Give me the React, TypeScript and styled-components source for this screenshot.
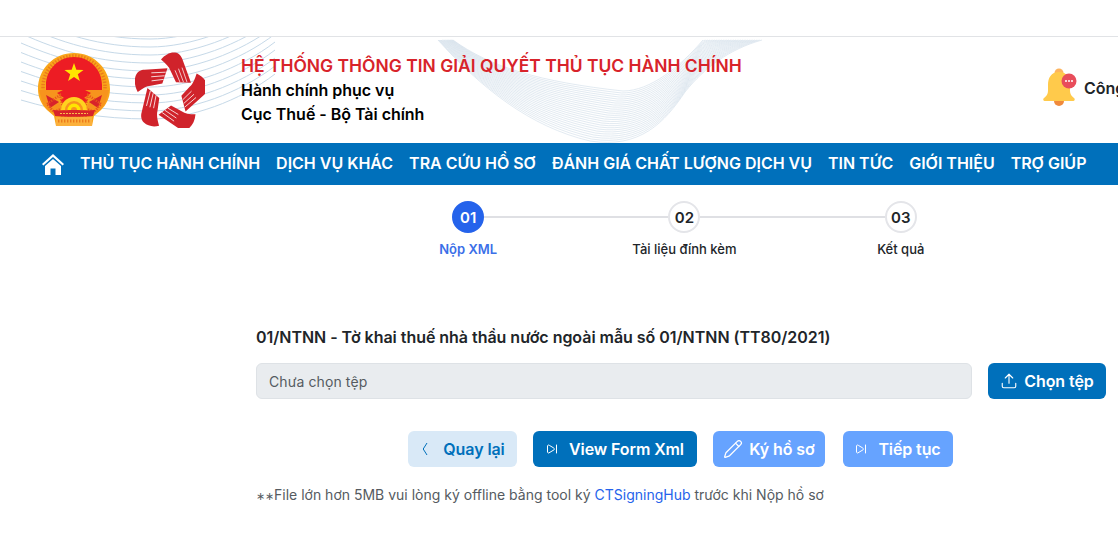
import React from "react";
import styled, { createGlobalStyle } from "styled-components";
import { Pencil, SkipForward, Upload } from "lucide-react";

const navItems = [
  "THỦ TỤC HÀNH CHÍNH",
  "DỊCH VỤ KHÁC",
  "TRA CỨU HỒ SƠ",
  "ĐÁNH GIÁ CHẤT LƯỢNG DỊCH VỤ",
  "TIN TỨC",
  "GIỚI THIỆU",
  "TRỢ GIÚP",
];

const steps = [
  { no: "01", label: "Nộp XML", active: true },
  { no: "02", label: "Tài liệu đính kèm", active: false },
  { no: "03", label: "Kết quả", active: false },
];

const GlobalStyle = createGlobalStyle`
  html, body {
    margin: 0;
    padding: 0;
    background: #fff;
    overflow: hidden;
    font-family: "Inter", "Liberation Sans", sans-serif;
    color: #212529;
  }
  * { box-sizing: border-box; }
`;

const Page = styled.div`
  width: 1118px;
  height: 546px;
  overflow: hidden;
`;

const TopBar = styled.div`
  height: 37px;
  border-bottom: 1px solid #e1e3e6;
`;

const Header = styled.header`
  position: relative;
  height: 106px;
  display: flex;
  align-items: center;
  padding: 0 0 0 38px;
  overflow: hidden;
`;

const HeaderArt = styled.svg`
  position: absolute;
  left: 0;
  top: 0;
  width: 800px;
  height: 106px;
`;

const Logos = styled.div`
  position: relative;
  display: flex;
  align-items: center;
  gap: 25px;
  width: 203px;
  flex-shrink: 0;
`;

const TitleBlock = styled.div`
  position: relative;
  width: 762px;
  flex-shrink: 0;
  display: flex;
  flex-direction: column;
`;

const Title = styled.div`
  font-size: 17.45px;
  line-height: 24px;
  font-weight: 600;
  color: #d8232a;
  white-space: nowrap;
`;

const SubTitle = styled.div`
  font-size: 16px;
  line-height: 24px;
  font-weight: 600;
  letter-spacing: -0.03px;
  color: #000;
  white-space: nowrap;
`;

const Notice = styled.div`
  position: relative;
  display: flex;
  align-items: center;
  gap: 6px;
  font-size: 16px;
  font-weight: 600;
  white-space: nowrap;
  margin: 0 0 4px 39px;
`;

const BellWrap = styled.span`
  display: flex;
  margin-bottom: 4px;
`;

const Nav = styled.nav`
  height: 42px;
  background: #0070bb;
  display: flex;
  align-items: center;
  gap: 16px;
  padding-left: 42px;
`;

const NavItem = styled.a`
  color: #fff;
  font-size: 16px;
  font-weight: 600;
  letter-spacing: -0.015px;
  white-space: nowrap;
  margin-bottom: 2px;
`;

const Stepper = styled.div`
  display: grid;
  grid-template-columns: repeat(3, 216.3px);
  margin: 16px 0 0 360px;
`;

const Step = styled.div`
  position: relative;
  display: flex;
  flex-direction: column;
  align-items: center;
  gap: 6px;

  &:not(:last-child)::after {
    content: "";
    position: absolute;
    top: 15px;
    left: calc(50% + 16px);
    width: 184.3px;
    height: 2px;
    background: #dfe0e4;
  }
`;

const StepDot = styled.div<{ $active: boolean }>`
  width: 32px;
  height: 32px;
  border-radius: 50%;
  display: flex;
  align-items: center;
  justify-content: center;
  font-size: 15px;
  font-weight: 600;
  color: ${(p) => (p.$active ? "#fff" : "#212529")};
  background: ${(p) => (p.$active ? "#2563eb" : "#fff")};
  border: 2px solid ${(p) => (p.$active ? "#2563eb" : "#e4e5e9")};
`;

const StepLabel = styled.div<{ $active: boolean }>`
  font-size: 13px;
  line-height: 20px;
  font-weight: ${(p) => (p.$active ? 600 : 500)};
  color: ${(p) => (p.$active ? "#3b6fe8" : "#212529")};
  white-space: nowrap;
`;

const Form = styled.section`
  margin: 66px 0 0 256px;
  width: 850px;
`;

const FormTitle = styled.div`
  font-size: 16px;
  line-height: 24px;
  font-weight: 600;
  letter-spacing: -0.03px;
  color: #212529;
`;

const FileRow = styled.div`
  display: flex;
  gap: 16px;
  margin-top: 14px;
`;

const FileInput = styled.div`
  flex: 1;
  height: 36px;
  padding: 0 12px;
  display: flex;
  align-items: center;
  font-size: 14px;
  letter-spacing: 0.1px;
  color: #555b61;
  background: #e9ecef;
  border: 1px solid #dee2e6;
  border-radius: 6px;
`;

const Button = styled.button<{
  $kind: "primary" | "muted" | "soft";
  $gap?: number;
  $width: number;
}>`
  width: ${(p) => p.$width}px;
  height: 36px;
  display: flex;
  align-items: center;
  justify-content: center;
  gap: ${(p) => p.$gap ?? 8}px;
  padding: 0;
  border: none;
  border-radius: 6px;
  font-family: inherit;
  font-size: 16px;
  font-weight: 600;
  letter-spacing: -0.1px;
  white-space: nowrap;
  color: ${(p) => (p.$kind === "soft" ? "#0070bb" : "#fff")};
  background: ${(p) =>
    p.$kind === "primary" ? "#0070bb" : p.$kind === "muted" ? "#66a3ff" : "#d9e9f7"};
`;

const ActionRow = styled.div`
  display: flex;
  margin: 32px 0 0 152px;
`;

const ActionSlot = styled.div<{ $after: number }>`
  margin-right: ${(p) => p.$after}px;
`;

const NoteLine = styled.div`
  margin-top: 17px;
  font-size: 14px;
  line-height: 21px;
  color: #555b61;
`;

const Stars = styled.span`
  font-size: 11px;
`;

const HubLink = styled.a`
  color: #2563eb;
`;

function HeaderBackdrop() {
  const fan = Array.from({ length: 11 }, (_, i) => i);
  const ribbon = Array.from({ length: 26 }, (_, i) => i);
  const mix = (a: number, b: number, t: number) => a + (b - a) * t;
  return (
    <HeaderArt viewBox="0 0 800 106" fill="none">
      {fan.map((i) => {
        const s = 63 - 9.5 * i;
        const t = 82 - 8 * i;
        const e = t - 45;
        return (
          <path
            key={`f${i}`}
            d={`M21 ${s} C 60 ${s + (t - s) * 0.6}, 100 ${t}, 150 ${t} C 190 ${t}, 240 ${t - 18}, 275 ${e}`}
            stroke="#c6d9e8"
            strokeWidth="1"
          />
        );
      })}
      {ribbon.map((i) => {
        const t = i / 25;
        return (
          <path
            key={`r${i}`}
            d={`M${mix(453, 438, t)} 3 C ${mix(490, 480, t)} ${mix(30, 50, t)}, ${mix(540, 530, t)} ${mix(45, 90, t)}, ${mix(623, 590, t)} ${mix(54, 104, t)} C ${mix(650, 640, t)} ${mix(54, 112, t)}, ${mix(680, 665, t)} ${mix(30, 85, t)}, ${mix(703, 685, t)} ${mix(3, 55, t)} C ${mix(703, 705, t)} ${mix(3, 30, t)}, ${mix(703, 730, t)} ${mix(3, 12, t)}, ${mix(703, 762, t)} 3`}
            stroke="#d6e1eb"
            strokeWidth="0.7"
          />
        );
      })}
    </HeaderArt>
  );
}

function Emblem() {
  const star = "0,-10 2.35,-3.2 9.5,-3.1 3.8,1.2 5.9,8.1 0,4 -5.9,8.1 -3.8,1.2 -9.5,-3.1 -2.35,-3.2";
  return (
    <svg width="72" height="74" viewBox="-36 -37 72 74">
      <path
        d="M0 -37 C20 -37 36 -21 36 -1 C36 8 32 15 27 20 L20 26 L18 36 L-18 36 L-20 26 L-27 20 C-32 15 -36 8 -36 -1 C-36 -21 -20 -37 0 -37Z"
        fill="#f9a61a"
      />
      <circle cx="0" cy="-3" r="31" fill="none" stroke="#ec7a1c" strokeWidth="3.5" strokeDasharray="1.4 1.6" />
      <path d="M0 -33 C16 -33 28 -20 28 -5 L28 1 L16 6 L10 16 L-10 16 L-16 6 L-28 1 L-28 -5 C-28 -20 -16 -33 0 -33Z" fill="#ed1c24" />
      <polygon points={star} transform="translate(0 -17)" fill="#ffe600" />
      <path d="M-35 0 L-11 0 L-17 3 L-10 8 L-16 10 L-11 20 L-24 22 L-31 14Z" fill="#f7941d" />
      <path d="M35 0 L11 0 L17 3 L10 8 L16 10 L11 20 L24 22 L31 14Z" fill="#f7941d" />
      <path d="M-28 5 L-15 12 L-24 18Z M28 5 L15 12 L24 18Z" fill="#d8232a" />
      <path d="M-27 14 L-14 5 L-11 18 L-20 22Z M27 14 L14 5 L11 18 L20 22Z" fill="none" stroke="#e8531d" strokeWidth="2.5" strokeDasharray="1.2 1.3" />
      <path d="M-13 20 A13 13 0 0 1 13 20Z" fill="#ffd21f" />
      <path d="M-9 20 A9 9 0 0 1 9 20Z" fill="#f7941d" />
      <path d="M-6.5 20 A6.5 6.5 0 0 1 6.5 20Z" fill="#ffe600" />
      <path d="M-3 20 A3 3 0 0 1 3 20Z" fill="#f7941d" />
      <path d="M-21 20 C-14 21 -8 20 0 20 C8 20 14 21 21 20 L19 26 C10 27 -10 27 -19 26Z" fill="#d8232a" />
      <path d="M-14 23.5 L14 23.5" stroke="#f9c04a" strokeWidth="1" strokeDasharray="2 1" />
      <path d="M-18 27 L18 27 L18 36 L-18 36Z" fill="#fbb03b" />
      <path d="M-16 31 L16 31" stroke="#ec7a1c" strokeWidth="3" strokeDasharray="1.4 1.6" />
    </svg>
  );
}

function HandStar() {
  return (
    <svg width="70" height="76" viewBox="-35 -41 70 76">
      <g transform="scale(1 1.08)">
        {[0, 72, 144, 216, 288].map((deg) => (
          <g key={deg} transform={`rotate(${deg})`}>
            <path
              d="M-9 -31 C-5 -35.5 0 -38 5 -37.5 C9 -37 11.5 -34 12.5 -31 L21 -9.5 L6 -10 L0.5 -20.5 C-1 -24.5 -4 -27 -9 -31Z"
              fill="#d0232b"
            />
            <path d="M5 -21 L10 -10 M8.5 -22.5 L13.5 -10 M12 -23.5 L17 -10" stroke="#fff" strokeWidth="0.7" />
          </g>
        ))}
      </g>
    </svg>
  );
}

function Bell() {
  return (
    <svg width="36" height="40" viewBox="0 0 36 40">
      <circle cx="17" cy="35" r="5" fill="#f08a3c" />
      <circle cx="17" cy="7" r="4.5" fill="#fdb45e" />
      <path
        d="M17 6 C9 6 6 12 6 19 L6 25 C6 28 4.5 30 2 32 C0.5 33.5 1.5 35 3 35 L31 35 C32.5 35 33.5 33.5 32 32 C29.5 30 28 28 28 25 L28 19 C28 12 25 6 17 6Z"
        fill="#ffca4b"
      />
      <circle cx="27" cy="15" r="7.5" fill="#e84d5b" />
      <circle cx="24" cy="15" r="1" fill="#fff" />
      <circle cx="27" cy="15" r="1" fill="#fff" />
      <circle cx="30" cy="15" r="1" fill="#fff" />
    </svg>
  );
}

function HomeIcon() {
  return (
    <svg width="22" height="21" viewBox="0 0 22 21" fill="#fff">
      <path d="M11 0 L22 10 L20.6 11.6 L11 3 L1.4 11.6 L0 10Z" />
      <path d="M11 5 L19 12 L19 21 L13.5 21 L13.5 14.5 L8.5 14.5 L8.5 21 L3 21 L3 12Z" />
    </svg>
  );
}

function BackChevron() {
  return (
    <svg width="8" height="14" viewBox="0 0 8 14" fill="none">
      <path d="M7 1 L3.2 7 L7 13" stroke="currentColor" strokeWidth="1" />
    </svg>
  );
}

export default function App() {
  return (
    <Page>
      <GlobalStyle />
      <TopBar />
      <Header>
        <HeaderBackdrop />
        <Logos>
          <Emblem />
          <HandStar />
        </Logos>
        <TitleBlock>
          <Title>HỆ THỐNG THÔNG TIN GIẢI QUYẾT THỦ TỤC HÀNH CHÍNH</Title>
          <SubTitle>Hành chính phục vụ</SubTitle>
          <SubTitle>Cục Thuế - Bộ Tài chính</SubTitle>
        </TitleBlock>
        <Notice>
          <BellWrap>
            <Bell />
          </BellWrap>
          Công dân
        </Notice>
      </Header>
      <Nav>
        <HomeIcon />
        {navItems.map((item) => (
          <NavItem key={item}>{item}</NavItem>
        ))}
      </Nav>
      <Stepper>
        {steps.map((s) => (
          <Step key={s.no}>
            <StepDot $active={s.active}>{s.no}</StepDot>
            <StepLabel $active={s.active}>{s.label}</StepLabel>
          </Step>
        ))}
      </Stepper>
      <Form>
        <FormTitle>01/NTNN - Tờ khai thuế nhà thầu nước ngoài mẫu số 01/NTNN (TT80/2021)</FormTitle>
        <FileRow>
          <FileInput>Chưa chọn tệp</FileInput>
          <Button $kind="primary" $width={118} $gap={6}>
            <Upload size={18} strokeWidth={1.5} />
            Chọn tệp
          </Button>
        </FileRow>
        <ActionRow>
          <ActionSlot $after={16}>
            <Button $kind="soft" $width={109} $gap={15}>
              <BackChevron />
              Quay lại
            </Button>
          </ActionSlot>
          <ActionSlot $after={16}>
            <Button $kind="primary" $width={164} $gap={11}>
              <SkipForward size={12} strokeWidth={2} />
              View Form Xml
            </Button>
          </ActionSlot>
          <ActionSlot $after={18}>
            <Button $kind="muted" $width={112} $gap={6}>
              <Pencil size={20} strokeWidth={1.5} />
              Ký hồ sơ
            </Button>
          </ActionSlot>
          <ActionSlot $after={0}>
            <Button $kind="muted" $width={110} $gap={11}>
              <SkipForward size={12} strokeWidth={2} />
              Tiếp tục
            </Button>
          </ActionSlot>
        </ActionRow>
        <NoteLine>
          <Stars>∗∗</Stars>File lớn hơn 5MB vui lòng ký offline bằng tool ký <HubLink>CTSigningHub</HubLink> trước khi Nộp hồ sơ
        </NoteLine>
      </Form>
    </Page>
  );
}
